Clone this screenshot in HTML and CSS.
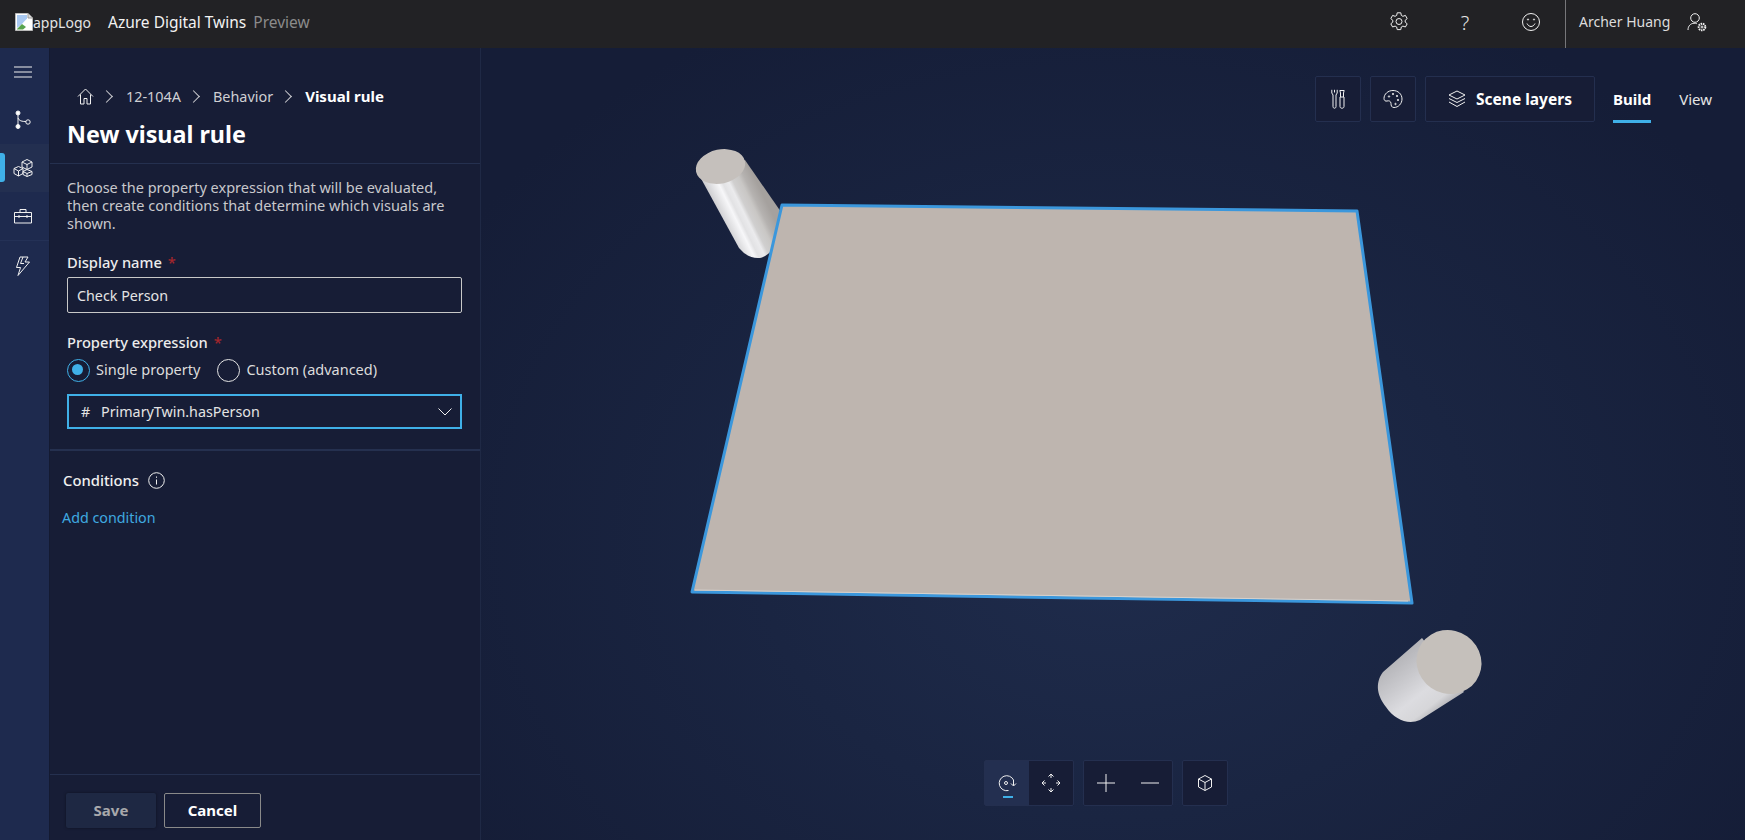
FILE: index.html
```html
<!DOCTYPE html>
<html lang="en">
<head>
    <meta charset="UTF-8">
    <meta name="viewport" content="width=device-width, initial-scale=1.0">
    <title>Azure Digital Twins</title>
    <link rel="stylesheet" href="styles.css">
</head>
<body>
    <header class="top-bar">
        <div class="brand">
            <span class="broken-logo">
                <svg width="18" height="18" viewBox="0 0 18 18"><path d="M.5.5H13L17.500 5V17.500H.5Z" fill="#fff" stroke="#b9b9b9"/><path d="M2 2H12V5.500L6 12 2 15Z" fill="#a9c9f2"/><path d="M2 16 7 11 11 14 8 16.500H2Z" fill="#58a34f"/><path d="M13 .5V5H17.500" fill="#ddd" stroke="#999"/></svg>appLogo
            </span>
            <span class="app-name">Azure Digital Twins</span>
            <span class="app-tag">Preview</span>
        </div>
        <div class="top-actions">
            <button class="top-btn" aria-label="Settings">
                <svg width="20" height="20" viewBox="0 0 20 20" class="line"><path d="M8.200.8h3.600l.5 2.600 1.600.9 2.500-.9 1.800 3.200-2 1.700v1.800l2 1.700-1.800 3.200-2.500-.9-1.600.9-.5 2.600H8.200l-.5-2.600-1.600-.9-2.500.9-1.800-3.200 2-1.700V8.300l-2-1.700 1.800-3.200 2.500.9 1.600-.9Z"/><circle cx="10" cy="9.500" r="3"/></svg>
            </button>
            <button class="top-btn help" aria-label="Help">?</button>
            <button class="top-btn" aria-label="Feedback">
                <svg width="20" height="20" viewBox="0 0 20 20" class="line"><circle cx="10" cy="10" r="8.500"/><path d="M6 11.500c1 2 2.500 3 4 3s3-1 4-3"/><circle cx="7" cy="7.500" r=".6"/><circle cx="13" cy="7.500" r=".6"/></svg>
            </button>
            <div class="user">
                <span>Archer Huang</span>
                <svg width="20" height="20" viewBox="0 0 20 20" class="line"><circle cx="8" cy="6" r="4.300"/><path d="M1 18c0-4 2.500-6.500 6-6.800 1 0 2 .1 2.800.5"/><circle cx="15" cy="15" r="3.300" stroke-width="2" stroke-dasharray="1.500 .8"/><circle cx="15" cy="15" r="1"/></svg>
            </div>
        </div>
    </header>

    <div class="main">
        <nav class="rail">
            <a class="rail-item">
                <svg width="18" height="18" viewBox="0 0 18 18" class="line"><path d="M0 4H18M0 9H18M0 14H18"/></svg>
            </a>
            <a class="rail-item">
                <svg width="16" height="20" viewBox="0 0 16 20" class="line"><path d="M3 3V16M3 8c1 3 4 3.500 8 3.500"/><circle cx="3" cy="3" r="2" fill="#fff"/><circle cx="3" cy="16.500" r="2" fill="#fff"/><circle cx="13" cy="12" r="2.200"/></svg>
            </a>
            <a class="rail-item active">
                <svg width="20" height="20" viewBox="0 0 20 20" class="line"><path d="M9 4 14 1.500 19 4V9L14 11.500 9 9ZM9 4 14 6.500 19 4M14 6.500V11"/><path d="M1 10.500 5.500 8.500 10 10.500V15.500L5.500 18 1 15.500ZM1 10.500 5.500 13 10 10.500M5.500 13V18"/><path d="M10 13.500 14 11.500 19 13.500V16.500L14 18.500 10 16.500ZM10 13.500 14 15.500 19 13.500M14 15.500V18.500"/></svg>
            </a>
            <a class="rail-item">
                <svg width="18" height="16" viewBox="0 0 18 16" class="line"><path d="M.5 4.500H17.500V15H.5ZM6 4.500V1.500H12V4.500M.5 8.500H17.500M5 7V10M13 7V10"/></svg>
            </a>
            <a class="rail-item bolt">
                <svg width="16" height="20" viewBox="0 0 16 20" class="line"><path d="M5 1H13L10 6H14.500L3 19.500 5.500 11.500H1.500ZM8 1 5.500 7.500H9"/></svg>
            </a>
        </nav>

        <aside class="panel">
            <div class="panel-head">
                <div class="breadcrumb">
                    <svg width="17" height="17" viewBox="0 0 17 17" class="line"><path d="M1 8.500 8.500 1 16 8.500M3.500 6.500V16H7V10.500H10V16H13.500V6.500"/></svg>
                    <span class="sep"></span>
                    <span>12-104A</span>
                    <span class="sep"></span>
                    <span>Behavior</span>
                    <span class="sep"></span>
                    <strong>Visual rule</strong>
                </div>
                <h1>New visual rule</h1>
            </div>

            <form class="panel-form">
                <p class="desc">Choose the property expression that will be evaluated, then create conditions that determine which visuals are shown.</p>

                <label class="field-label">Display name <em>*</em></label>
                <div class="text-input">Check Person</div>

                <label class="field-label second">Property expression <em>*</em></label>
                <div class="radios">
                    <span class="radio checked">Single property</span>
                    <span class="radio">Custom (advanced)</span>
                </div>
                <div class="dropdown">
                    <span class="hash">#</span>
                    <span>PrimaryTwin.hasPerson</span>
                    <svg width="14" height="8" viewBox="0 0 14 8" class="line"><path d="M.5.5 7 7 13.500.5"/></svg>
                </div>
            </form>

            <section class="conditions">
                <div class="cond-title">
                    Conditions
                    <svg width="17" height="17" viewBox="0 0 17 17" class="line"><circle cx="8.500" cy="8.500" r="7.800"/><path d="M8.500 7.500V12.500M8.500 4.500V5.800"/></svg>
                </div>
                <a class="add-link">Add condition</a>
            </section>

            <footer class="panel-foot">
                <button class="btn-save" disabled>Save</button>
                <button class="btn-cancel">Cancel</button>
            </footer>
        </aside>

        <main class="viewer">
            <!-- the 3d scene, viewBox keeps page pixels so the shapes read as measured -->
            <svg class="scene" width="1264" height="792" viewBox="481 48 1264 792">
                <defs>
                    <linearGradient id="cylA" gradientUnits="userSpaceOnUse" x1="701" y1="182" x2="746" y2="160">
                        <stop offset="0" stop-color="#c6c6c9"/>
                        <stop offset=".18" stop-color="#e4e4e6"/>
                        <stop offset=".3" stop-color="#f7f7f9"/>
                        <stop offset=".38" stop-color="#e2e2e4"/>
                        <stop offset=".5" stop-color="#ebebed"/>
                        <stop offset=".58" stop-color="#d0cfcf"/>
                        <stop offset=".72" stop-color="#c9c7c5"/>
                        <stop offset=".82" stop-color="#b5b2b0"/>
                        <stop offset="1" stop-color="#a5a19e"/>
                    </linearGradient>
                    <linearGradient id="cylB" gradientUnits="userSpaceOnUse" x1="1420" y1="640" x2="1464" y2="696">
                        <stop offset="0" stop-color="#b5b5b9"/>
                        <stop offset=".3" stop-color="#c8c8cc"/>
                        <stop offset=".6" stop-color="#dcdce0"/>
                        <stop offset=".82" stop-color="#d6d6d9"/>
                        <stop offset="1" stop-color="#a8a8ac"/>
                    </linearGradient>
                </defs>
                <path d="M698 173 739 248Q748 259 760 258 772 256 790 225L745 160Z" fill="url(#cylA)"/>
                <ellipse cx="720.500" cy="166.500" rx="25" ry="17" transform="rotate(-12 720.500 166.500)" fill="#c5c0bc"/>
                <path d="M692 592 782 205 1357 211 1412 603Z" fill="#beb5af" stroke="#3b97dc" stroke-width="3" stroke-linejoin="round"/>
                <path d="M695 590 1408 601" fill="none" stroke="#d6d2ce" stroke-width="1"/>
                <path d="M1422 638 1383 672C1374 684 1378 697 1386 707 1395 720 1408 725 1420 720L1464 692Z" fill="url(#cylB)"/>
                <ellipse cx="1449" cy="662" rx="33" ry="31.500" transform="rotate(35 1449 662)" fill="#c5c0bb"/>
            </svg>

            <div class="scene-tools">
                <button class="tool-btn" aria-label="Tools">
                    <svg width="14" height="20" viewBox="0 0 14 20" class="line"><path d="M.8.8V4L2 6V17.500C2 19.800 5 19.800 5 17.500V6L6.200 4V.8M3.500.8V3.500M9 8V17.500C9 19.800 13 19.800 13 17.500V8ZM9.500 8V4L8.800 1.500H13.200L12.500 4V8"/></svg>
                </button>
                <button class="tool-btn" aria-label="Style">
                    <svg width="20" height="20" viewBox="0 0 20 20" class="line"><path d="M10 1.500C5 1.500 1 5 1 9.500c0 2 1.500 3 3 2.500 2-.6 4 .2 4 2.500 0 2 .5 4 3 4 4.500 0 8-4 8-8.500C19 5 15 1.500 10 1.500Z"/><circle cx="6" cy="7.500" r=".7"/><circle cx="10" cy="5" r=".7"/><circle cx="14" cy="7" r=".7"/><circle cx="15" cy="11" r=".7"/><circle cx="12.500" cy="15" r=".7"/></svg>
                </button>
                <button class="tool-btn wide">
                    <svg width="18" height="18" viewBox="0 0 18 18" class="line"><path d="M9 1 17 5 9 9 1 5ZM1 8.500 9 12.500 17 8.500M1 12 9 16.500 17 12"/></svg>
                    Scene layers
                </button>
                <div class="tabs">
                    <span class="tab on">Build</span>
                    <span class="tab">View</span>
                </div>
            </div>

            <div class="view-tools">
                <div class="tool-group">
                    <button class="view-btn on" aria-label="Orbit">
                        <svg width="20" height="20" viewBox="0 0 20 20" class="line"><path d="M16.500 7A7.500 7.500 0 1 0 11.500 17.500M16.500 7V12.500M14 10.500 16.500 13 19 10.500"/><circle cx="9" cy="10" r="1.500"/></svg>
                    </button>
                    <button class="view-btn" aria-label="Pan">
                        <svg width="20" height="20" viewBox="0 0 20 20" class="line"><path d="M10 1V5M10 15V19M1 10H5M15 10H19M7.500 3.500 10 1 12.500 3.500M7.500 16.500 10 19 12.500 16.500M3.500 7.500 1 10 3.500 12.500M16.500 7.500 19 10 16.500 12.500"/></svg>
                    </button>
                </div>
                <div class="tool-group">
                    <button class="view-btn" aria-label="Zoom in">
                        <svg width="20" height="20" viewBox="0 0 20 20" class="line"><path d="M10 1V19M1 10H19"/></svg>
                    </button>
                    <button class="view-btn" aria-label="Zoom out">
                        <svg width="20" height="20" viewBox="0 0 20 20" class="line"><path d="M1 10H19"/></svg>
                    </button>
                </div>
                <div class="tool-group">
                    <button class="view-btn" aria-label="Reset view">
                        <svg width="18" height="18" viewBox="0 0 18 18" class="line"><path d="M9 1.500 15.500 5V13L9 16.500 2.500 13V5ZM2.500 5 9 8.500 15.500 5M9 8.500V16.500"/></svg>
                    </button>
                </div>
            </div>
        </main>
    </div>
</body>
</html>
```

FILE: styles.css
```css
/* General */
* {
    box-sizing: border-box;
}

body {
    margin: 0;
    height: 100vh;
    overflow: hidden;
    display: flex;
    flex-direction: column;
    font-family: 'Noto Sans', 'Open Sans', sans-serif;
    font-size: 14.3px;
    color: #fff;
    background: #171d36;
}

button {
    font-family: inherit;
    color: inherit;
    background: none;
    border: none;
    padding: 0;
}

svg {
    display: block;
    flex: none;
}

.line {
    fill: none;
    stroke: #f0f0f0;
    stroke-width: 1;
}

/* Top bar */
.top-bar {
    height: 48px;
    flex: none;
    display: flex;
    align-items: center;
    justify-content: space-between;
    background: #222225;
}

.brand {
    display: flex;
    align-items: center;
    padding: 0 0 4px 15px;
}

.broken-logo {
    display: flex;
    align-items: center;
    width: 93px;
    color: #e4e4e4;
    font-size: 14px;
}

.app-name {
    font-size: 15.500px;
    color: #f2f2f2;
}

.app-tag {
    margin-left: 7px;
    font-size: 15.500px;
    color: #8b8b8b;
}

.top-actions {
    display: flex;
    align-items: center;
    height: 100%;
}

.top-btn {
    width: 66px;
    height: 100%;
    padding-bottom: 4px;
    display: flex;
    align-items: center;
    justify-content: center;
}

.top-btn.help {
    font-size: 20px;
    font-weight: 300;
    color: #e6e6e6;
}

.user {
    height: 100%;
    width: 180px;
    margin-left: 1px;
    display: flex;
    align-items: center;
    gap: 17px;
    padding: 0 0 5px 13px;
    border-left: 1px solid #77777a;
    font-size: 14px;
    color: #dcdcdc;
}

/* Layout */
.main {
    flex: 1;
    display: flex;
    min-height: 0;
}

/* Left rail */
.rail {
    width: 50px;
    flex: none;
    background: #1e2a4e;
    border-right: 1px solid #141a31;
}

.rail-item {
    height: 48px;
    padding-right: 3px;
    display: flex;
    align-items: center;
    justify-content: center;
    position: relative;
}

.rail-item.active {
    background: #232f50;
}

.rail-item.active::before {
    content: '';
    position: absolute;
    left: 0;
    top: 9px;
    width: 5px;
    height: 29px;
    border-radius: 0 3px 3px 0;
    background: #3fb0e8;
}

.rail-item.bolt {
    border-top: 1px solid #243156;
    height: 50px;
}

/* Panel */
.panel {
    width: 431px;
    flex: none;
    display: flex;
    flex-direction: column;
    background: #171d36;
    border-right: 1px solid #1f2945;
}

.panel-head {
    height: 116px;
    padding: 38px 17px 0 18px;
    border-bottom: 1px solid #25304f;
}

.breadcrumb {
    display: flex;
    align-items: center;
    height: 20px;
    padding-left: 9px;
    font-size: 14.400px;
    color: #cfcfd3;
}

.breadcrumb strong {
    color: #fff;
    font-weight: 700;
    font-size: 15px;
}

.sep {
    width: 9px;
    height: 9px;
    margin: 0 15px 0 8px;
    border-top: 1px solid #cfcfd3;
    border-right: 1px solid #cfcfd3;
    transform: rotate(45deg);
}

.panel-head h1 {
    margin: 11px 0 0 -1px;
    font-size: 23.300px;
    line-height: 34px;
    font-weight: 700;
}

.panel-form {
    padding: 14px 18px 20px 17px;
    border-bottom: 2px solid #25304f;
}

.desc {
    margin: 0;
    font-size: 14.500px;
    line-height: 18px;
    color: #c8c8cc;
}

.field-label {
    display: block;
    margin: 20px 0 5px 0;
    font-size: 14.700px;
    line-height: 20px;
    font-weight: 500;
    color: #ececec;
}

.field-label.second {
    margin-top: 19px;
    margin-bottom: 3px;
}

.field-label em {
    color: #a4262c;
    font-style: normal;
    margin-left: 2px;
}

.text-input {
    height: 36px;
    padding-left: 9px;
    display: flex;
    align-items: center;
    border: 1px solid #c8c8c8;
    border-radius: 2px;
    color: #e4e4e4;
}

.radios {
    display: flex;
    gap: 17px;
    height: 28px;
    align-items: center;
    font-size: 14.500px;
}

.radio {
    position: relative;
    padding-left: 29px;
    color: #dcdcdc;
}

.radio::before {
    content: '';
    position: absolute;
    left: 0;
    top: 0;
    width: 21px;
    height: 21px;
    border-radius: 50%;
    border: 1px solid #e4e4e4;
}

.radio.checked::before {
    border-color: #3fb0e8;
}

.radio.checked::after {
    content: '';
    position: absolute;
    left: 5px;
    top: 5px;
    width: 11px;
    height: 11px;
    border-radius: 50%;
    background: #3fb0e8;
}

.dropdown {
    height: 35px;
    margin-top: 11px;
    padding: 0 8px 0 12px;
    display: flex;
    align-items: center;
    border: 2px solid #3fb0e8;
    color: #e4e4e4;
}

.hash {
    width: 20px;
}

.dropdown svg {
    margin-left: auto;
}

.conditions {
    padding: 18px 0 0 13px;
}

.cond-title {
    display: flex;
    align-items: center;
    gap: 9px;
    height: 22px;
    font-size: 14.800px;
    font-weight: 500;
    color: #f0f0f0;
}

.add-link {
    display: block;
    margin: 17px 0 0 -1px;
    color: #3fa9e0;
}

.panel-foot {
    margin-top: auto;
    height: 66px;
    padding: 18px 0 0 16px;
    display: flex;
    gap: 8px;
    border-top: 1px solid #25304f;
}

.btn-save,
.btn-cancel {
    height: 35px;
    padding-bottom: 2px;
    font-size: 15px;
    font-weight: 700;
    border-radius: 2px;
}

.btn-save {
    width: 90px;
    color: #a8a8ac;
    background: #1e2843;
    box-shadow: 0 0 3px rgba(0, 0, 0, 0.4);
}

.btn-cancel {
    width: 97px;
    border: 1px solid #8a8a8a;
}

/* Viewer */
.viewer {
    flex: 1;
    position: relative;
    min-width: 0;
    background: radial-gradient(ellipse at 50% 62%, #1f2c4c 0%, #1a2542 40%, #151d37 85%);
}

.scene {
    position: absolute;
    left: 0;
    top: 0;
}

.scene-tools {
    position: absolute;
    top: 28px;
    right: 33px;
    display: flex;
    gap: 9px;
    align-items: flex-start;
}

.tool-btn {
    width: 46px;
    height: 46px;
    display: flex;
    align-items: center;
    justify-content: center;
    gap: 10px;
    border: 1px solid #242f4f;
    border-radius: 2px;
    background: #171d36;
    font-size: 15.500px;
    font-weight: 700;
}

.tool-btn.wide {
    width: 170px;
}

.tabs {
    display: flex;
    gap: 28px;
    margin-left: 9px;
}

.tab {
    height: 47px;
    line-height: 46px;
    font-size: 15px;
    color: #e4e4e4;
}

.tab.on {
    font-weight: 700;
    color: #fff;
    border-bottom: 3px solid #3fb0e8;
}

.view-tools {
    position: absolute;
    left: 503px;
    top: 712px;
    display: flex;
    gap: 9px;
}

.tool-group {
    display: flex;
    border: 1px solid #242f4f;
    border-radius: 2px;
    background: #171d36;
}

.view-btn {
    width: 44px;
    height: 44px;
    display: flex;
    align-items: center;
    justify-content: center;
    position: relative;
}

.view-btn.on {
    background: #232f50;
}

.view-btn.on::after {
    content: '';
    position: absolute;
    left: 18px;
    bottom: 7px;
    width: 10px;
    height: 2px;
    background: #3fb0e8;
}
```
